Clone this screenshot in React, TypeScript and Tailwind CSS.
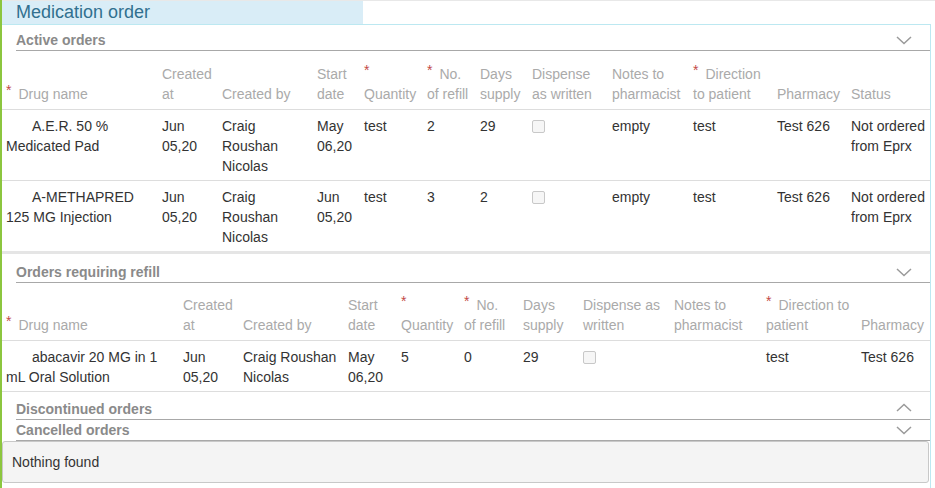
import type { ReactNode } from "react"

type Column = {
  w: string
  head: string[]
  req?: boolean
}

type Cell = string | null // null = disabled checkbox

const ACTIVE_COLS: Column[] = [
  { w: "w-[160px]", head: ["Drug name"], req: true },
  { w: "w-[60px]", head: ["Created", "at"] },
  { w: "w-[95px]", head: ["Created by"] },
  { w: "w-[47px]", head: ["Start", "date"] },
  { w: "w-[63px]", head: ["", "Quantity"], req: true },
  { w: "w-[53px]", head: ["No.", "of refill"], req: true },
  { w: "w-[52px]", head: ["Days", "supply"] },
  { w: "w-[80px]", head: ["Dispense", "as written"] },
  { w: "w-[81px]", head: ["Notes to", "pharmacist"] },
  { w: "w-[84px]", head: ["Direction", "to patient"], req: true },
  { w: "w-[74px]", head: ["Pharmacy"] },
  { w: "w-[79px]", head: ["Status"] },
]

const ACTIVE_ROWS: Cell[][] = [
  ["A.E.R. 50 % Medicated Pad", "Jun 05,20", "Craig Roushan Nicolas", "May 06,20", "test", "2", "29", null, "empty", "test", "Test 626", "Not ordered from Eprx"],
  ["A-METHAPRED 125 MG Injection", "Jun 05,20", "Craig Roushan Nicolas", "Jun 05,20", "test", "3", "2", null, "empty", "test", "Test 626", "Not ordered from Eprx"],
]

const REFILL_COLS: Column[] = [
  { w: "w-[181px]", head: ["Drug name"], req: true },
  { w: "w-[60px]", head: ["Created", "at"] },
  { w: "w-[105px]", head: ["Created by"] },
  { w: "w-[53px]", head: ["Start", "date"] },
  { w: "w-[63px]", head: ["", "Quantity"], req: true },
  { w: "w-[59px]", head: ["No.", "of refill"], req: true },
  { w: "w-[60px]", head: ["Days", "supply"] },
  { w: "w-[91px]", head: ["Dispense as", "written"] },
  { w: "w-[92px]", head: ["Notes to", "pharmacist"] },
  { w: "w-[95px]", head: ["Direction to", "patient"], req: true },
  { w: "w-[69px]", head: ["Pharmacy"] },
]

const REFILL_ROWS: Cell[][] = [
  ["abacavir 20 MG in 1 mL Oral Solution", "Jun 05,20", "Craig Roushan Nicolas", "May 06,20", "5", "0", "29", null, "", "test", "Test 626"],
]

function Chevron({ up = false, className = "" }: { up?: boolean; className?: string }) {
  return (
    <svg width="16" height="9" viewBox="0 0 16 9" className={className}>
      <polyline
        points={up ? "1,8 8,1.5 15,8" : "1,1 8,7.5 15,1"}
        fill="none"
        stroke="#9a9a9a"
        strokeWidth="1.5"
      />
    </svg>
  )
}

function SectionHeader({ title, up, className = "" }: { title: string; up?: boolean; className?: string }) {
  return (
    <div className={`ml-[14px] flex h-[21px] items-center justify-between border-b border-[#a8a8a8] pr-[18px] ${className}`}>
      <span className="text-[14px] font-bold leading-[20px] text-[#8a8a8a]">{title}</span>
      <Chevron up={up} className={up ? "-mt-[4px]" : ""} />
    </div>
  )
}

function Req() {
  return <span className="relative -top-[4px] mr-[7px] text-[#c24a46]">*</span>
}

function Checkbox() {
  return <div className="mt-[4px] h-[13px] w-[13px] rounded-[2px] border border-[#c8c8c8] bg-[#f6f6f6]" />
}

function OrdersTable({
  cols,
  rows,
  lastBorder,
  headPad = "pt-[13px]",
}: {
  cols: Column[]
  rows: Cell[][]
  lastBorder?: boolean
  headPad?: string
}) {
  const last = cols.length - 1
  const pad = (i: number) => (i === 0 ? "pl-[4px] pr-[10px]" : i === last ? "pr-0" : "pr-[10px]")

  return (
    <table className="w-[928px] table-fixed border-collapse text-[14px] leading-[20px]">
      <colgroup>
        {cols.map((c, i) => (
          <col key={i} className={c.w} />
        ))}
      </colgroup>
      <thead>
        <tr>
          {cols.map((c, i) => (
            <th
              key={i}
              className={`border-b border-[#dddddd] pb-[5px] text-left align-bottom font-normal text-[#aaaaaa] ${headPad} ${pad(i)}`}
            >
              {c.head.map((line, j) => (
                <div key={j} className="h-[20px] whitespace-nowrap">
                  {j === 0 && c.req && <Req />}
                  {line}
                </div>
              ))}
            </th>
          ))}
        </tr>
      </thead>
      <tbody>
        {rows.map((r, ri) => (
          <tr key={ri} className={lastBorder ? "border-b border-[#dddddd]" : ""}>
            {r.map((cell, i) => {
              let content: ReactNode = cell
              if (cell === null) content = <Checkbox />
              return (
                <td
                  key={i}
                  className={`border-t border-[#dddddd] pt-[6px] pb-[4px] align-top text-[#333333] ${pad(i)} ${i === 0 ? "indent-[26px]" : ""}`}
                >
                  {content}
                </td>
              )
            })}
          </tr>
        ))}
      </tbody>
    </table>
  )
}

export default function App() {
  return (
    <div className="flex h-[488px] w-[935px] overflow-hidden bg-white font-['Liberation_Sans',Arial,sans-serif]">
      {/* green accent strip */}
      <div className="w-[2px] shrink-0 bg-[#8cc63f]" />

      <div className="flex min-w-0 flex-1 flex-col">
        <div className="h-px bg-[#e8e8e8]" />
        <div className="h-[23px] w-[361px] bg-[#d9edf7] pl-[14px] text-[18px] leading-[23px] text-[#31708f]">
          Medication order
        </div>

        <div className="mr-[4px] flex-1 border-t border-r border-[#bce8f1]">
          {/* Active orders */}
          <SectionHeader title="Active orders" className="mt-[5px]" />
          <OrdersTable cols={ACTIVE_COLS} rows={ACTIVE_ROWS} />
          <div className="h-[3px] bg-[#e5e5e5]" />

          {/* Orders requiring refill */}
          <SectionHeader title="Orders requiring refill" className="mt-[8px]" />
          <OrdersTable cols={REFILL_COLS} rows={REFILL_ROWS} lastBorder headPad="pt-[12px]" />

          {/* Collapsed sections */}
          <SectionHeader title="Discontinued orders" up className="mt-[7px]" />
          <SectionHeader title="Cancelled orders" />

          <div className="mr-[1px] h-[42px] rounded-[3px] border border-[#c8c8c8] bg-[#f4f4f4] pt-[10px] pl-[9px] text-[14px] leading-[20px] text-[#333333]">
            Nothing found
          </div>
        </div>
      </div>
    </div>
  )
}
